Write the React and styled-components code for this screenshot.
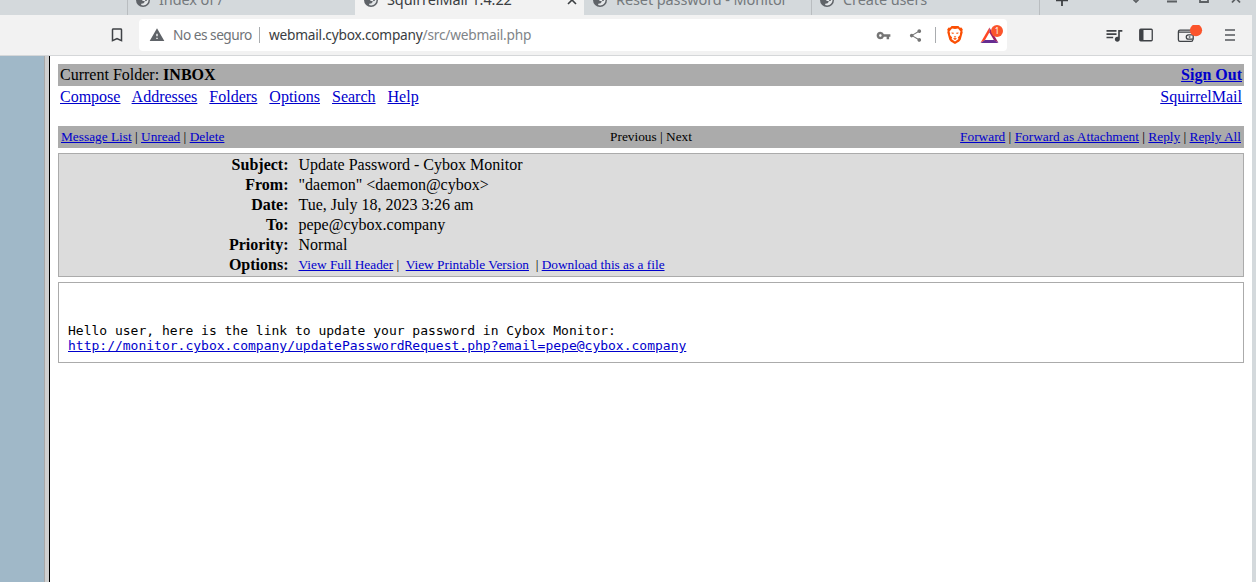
import React from "react";
import styled, { createGlobalStyle } from "styled-components";
import {
  MdVpnKey,
  MdShare,
  MdWarning,
  MdBookmarkBorder,
  MdQueueMusic,
} from "react-icons/md";

const GlobalStyle = createGlobalStyle`
  * { box-sizing: border-box; }
  html, body { margin: 0; padding: 0; overflow: hidden; background: #fff; }
`;

const Window = styled.div`
  display: flex;
  flex-direction: column;
  width: 1256px;
  height: 582px;
  padding-right: 4px;
  overflow: hidden;
  background: #d4d9dc;
  font-family: "Noto Sans", sans-serif;
`;

const TabStrip = styled.div`
  display: flex;
  flex: none;
  height: 15px;
  align-items: flex-end;
  overflow: hidden;
`;

const Tab = styled.div`
  display: flex;
  flex: none;
  align-items: center;
  width: ${(p) => p.$width}px;
  height: 30px;
  padding-left: ${(p) => (p.$divider ? 8 : 9)}px;
  background: ${(p) => (p.$active ? "#f2f2f2" : "transparent")};
  border-left: ${(p) => (p.$divider ? "1px solid #b9bdc0" : "none")};
  color: ${(p) => (p.$active ? "#3b3e42" : "#75797d")};
  svg { flex: none; }
`;

const TabTitle = styled.span`
  flex: 1;
  margin-left: 9px;
  padding-bottom: 2px;
  font-size: 14.5px;
  line-height: 20px;
  letter-spacing: -0.1px;
  white-space: nowrap;
`;

const TabClose = styled.svg`
  margin-right: 7px;
`;

const TabControls = styled.div`
  display: flex;
  flex: 1;
  height: 30px;
  align-items: center;
  border-left: 1px solid #b9bdc0;
`;

const Toolbar = styled.div`
  display: flex;
  flex: none;
  align-items: center;
  height: 41px;
  padding: 0 17px 0 108px;
  background: #f2f2f2;
  border-bottom: 1px solid #d5d7d9;
  color: #3f4246;
  svg { flex: none; }
`;

const AddressBar = styled.div`
  display: flex;
  flex: none;
  align-items: center;
  width: 868px;
  height: 32px;
  margin-left: 13px;
  padding: 0 3px 0 10px;
  border-radius: 4px;
  background: #fff;
  color: #6f7377;
  font-size: 13.7px;
  line-height: 18px;
  white-space: nowrap;
`;

const Security = styled.span`
  width: 79px;
  margin-left: 8px;
  letter-spacing: -0.5px;
`;

const Divider = styled.span`
  width: 1px;
  height: 16px;
  margin: 0 ${(p) => p.$right}px 0 ${(p) => p.$left}px;
  background: #a9acaf;
`;

const Url = styled.span`
  flex: 1;
  color: #808488;
  letter-spacing: -0.22px;
`;

const Host = styled.span`
  color: #3a3d41;
`;

const Actions = styled.div`
  display: flex;
  flex: none;
  align-items: center;
  color: #757575;
`;

const ShareIcon = styled(MdShare)`
  margin-left: 17px;
`;

const Rewards = styled.div`
  position: relative;
  width: 24px;
  height: 22px;
  padding-top: 3px;
  margin-left: 17px;
`;

const Badge = styled.span`
  position: absolute;
  top: 1px;
  right: 1px;
  width: 12px;
  height: 12px;
  border-radius: 6px;
  background: #fb542b;
  color: #fff;
  font-size: 8px;
  line-height: 12px;
  text-align: center;
`;

const Tools = styled.div`
  display: flex;
  align-items: center;
  margin-left: auto;
`;

const Tool = styled.span`
  display: flex;
  margin-left: ${(p) => p.$gap || 0}px;
`;

const Frames = styled.div`
  display: flex;
  flex: 1;
  background: #fff;
`;

const FolderPane = styled.div`
  width: 44px;
  background: #a0b8c8;
`;

const FrameBorder = styled.div`
  width: 6px;
  background: #d0d0d0;
  border-left: 1px solid #a8a8a8;
  border-right: 1px solid #000;
`;

const Mail = styled.main`
  flex: 1;
  padding: 8px;
  color: #000;
  font-family: "Liberation Serif", serif;
  font-size: 16px;
  line-height: 20px;
`;

const Link = styled.a`
  color: #0000cc;
  text-decoration: underline;
  cursor: pointer;
`;

const Row = styled.div`
  display: flex;
  justify-content: space-between;
  height: 22px;
  padding: 1px 2px;
  background: ${(p) => (p.$shaded ? "#ababab" : "transparent")};
`;

const Menu = styled.div`
  white-space: pre;
`;

const MessageBar = styled.div`
  display: grid;
  grid-template-columns: 1fr auto 1fr;
  height: 22px;
  margin-top: 18px;
  padding: 1px 3px;
  background: #ababab;
  font-size: 13.333px;
  white-space: pre;
`;

const BarGroup = styled.div`
  text-align: ${(p) => p.$align};
`;

const Headers = styled.dl`
  display: grid;
  grid-template-columns: 229.5px 1fr;
  column-gap: 10px;
  height: 124px;
  margin: 5px 0 0;
  padding: 1px 0;
  border: 1px solid #ababab;
  background: #dcdcdc;
`;

const Label = styled.dt`
  font-weight: bold;
  text-align: right;
`;

const Value = styled.dd`
  margin: 0;
  font-size: ${(p) => (p.$small ? 13.333 : 16)}px;
  white-space: pre;
`;

const Body = styled.div`
  height: 81px;
  margin-top: 5px;
  padding: 40px 9px 0;
  border: 1px solid #ababab;
  font-family: "DejaVu Sans Mono", monospace;
  font-size: 13px;
  line-height: 15px;
`;

const Globe = () => (
  <svg width="14" height="14" viewBox="0 0 14 14">
    <circle cx="7" cy="7" r="7" fill="#5f6368" />
    <path
      d="M8.3 1.6C10.8 2.2 12.5 4.3 12.5 7C12.5 10 10.1 12.4 7.2 12.4C6.4 12.4 5.7 12.3 5 12L5.6 10.6H7.2L8.6 9V8H6.4V6.6L7.6 5.5V4.2H8.3Z"
      fill="#e4e7e9"
    />
    <path d="M9.4 6.2L10.8 6.4L11 7.6L9.8 8.2L9 7.4Z" fill="#5f6368" />
  </svg>
);

const Lion = () => (
  <svg width="16" height="18" viewBox="0 0 16 18">
    <path
      d="M4.6 0H11.4L13 1.7L14.4 1.5L15.8 3.5L15.3 5L15.7 6.2L13.8 13.2C13.3 14.8 12 15.7 8 18C4 15.7 2.7 14.8 2.2 13.2L0.3 6.2L0.7 5L0.2 3.5L1.6 1.5L3 1.7Z"
      fill="#fb4f04"
    />
    <path
      d="M5 2.6L8 3.1L11 2.6L13.5 5.5L12.9 7.4L13 9L10.8 11.5L11.5 13L8 15.5L4.5 13L5.2 11.5L3 9L3.1 7.4L2.5 5.5Z"
      fill="#fff"
    />
    <path
      d="M4.4 6.4L6.8 6.7L6.4 8L4.8 7.5ZM11.6 6.4L9.2 6.7L9.6 8L11.2 7.5ZM6.8 10L8 10.6L9.2 10L8.6 11.5H7.4ZM6 12.6L8 11.9L10 12.6L8 13.9Z"
      fill="#fb4f04"
    />
  </svg>
);

const Triangle = () => (
  <svg width="19" height="17" viewBox="0 0 19 17">
    <path d="M9.4 0.6L0.6 15.8L4.9 13.2L9.4 5.5Z" fill="#ff4724" />
    <path d="M9.4 0.6L18.4 15.8L14 13.2L9.4 5.5Z" fill="#9e1f63" />
    <path d="M0.6 16L18.4 16L14.2 12.9H4.9Z" fill="#662d91" />
  </svg>
);

const Sidebar = () => (
  <svg width="14" height="14" viewBox="0 0 14 14">
    <rect x="0.75" y="1.25" width="12.5" height="11.5" rx="1" fill="none" stroke="currentColor" strokeWidth="1.3" />
    <path d="M1 1h3.5v12H1z" fill="currentColor" />
  </svg>
);

const Wallet = () => (
  <svg width="26" height="20" viewBox="0 0 26 20" fill="none" stroke="currentColor" strokeWidth="1.3">
    <path d="M15.8 9V8.5a1.3 1.3 0 0 0-1.3-1.3H1.7M14 5.2H3a1.6 1.6 0 0 0-1.6 1.6v8a1.6 1.6 0 0 0 1.6 1.6h11.2a1.6 1.6 0 0 0 1.6-1.6" />
    <path d="M16.2 9.8h-4.7a2.2 2.2 0 0 0 0 4.4h4.7z" />
    <path d="M11.8 12h1.6" />
    <circle cx="19" cy="5.2" r="6.1" fill="#fb542b" stroke="none" />
  </svg>
);

const Burger = () => (
  <svg width="10" height="14" viewBox="0 0 10 14" stroke="#55585c" strokeWidth="1.7">
    <path d="M0 2h10M0 7h10M0 12h10" />
  </svg>
);

const WindowControls = () => (
  <svg width="212" height="30" viewBox="0 -15 212 30" fill="none" stroke="#3d4043" strokeWidth="1.8">
    <path d="M16 0.3H28M22-6V6" />
    <path d="M91-3L96 2L101-3M127 1.5H137M160-5V2H168V-5M192-6L200 2.5M200-6L192 2.5" stroke="#5c6063" />
  </svg>
);

const MENU = ["Compose", "Addresses", "Folders", "Options", "Search", "Help"];

const HEADERS = [
  ["Subject:", "Update Password - Cybox Monitor"],
  ["From:", '"daemon" <daemon@cybox>'],
  ["Date:", "Tue, July 18, 2023 3:26 am"],
  ["To:", "pepe@cybox.company"],
  ["Priority:", "Normal"],
];

function LinkList({ items, separator = " | " }) {
  return items.map((item, i) => (
    <React.Fragment key={item}>
      {i > 0 && separator}
      <Link>{item}</Link>
    </React.Fragment>
  ));
}

export default function App() {
  return (
    <Window>
      <GlobalStyle />
      <TabStrip>
        <Tab $width={127} />
        <Tab $width={228} $divider>
          <Globe />
          <TabTitle>Index of /</TabTitle>
        </Tab>
        <Tab $width={229} $active>
          <Globe />
          <TabTitle>SquirrelMail 1.4.22</TabTitle>
          <TabClose width="10" height="10" viewBox="0 0 10 10" stroke="#3d4043" strokeWidth="1.6">
            <path d="M1 1L9 9M9 1L1 9" />
          </TabClose>
        </Tab>
        <Tab $width={227}>
          <Globe />
          <TabTitle>Reset password - Monitor</TabTitle>
        </Tab>
        <Tab $width={228} $divider>
          <Globe />
          <TabTitle>Create users</TabTitle>
        </Tab>
        <TabControls>
          <WindowControls />
        </TabControls>
      </TabStrip>

      <Toolbar>
        <MdBookmarkBorder size={18} />
        <AddressBar>
          <MdWarning size={16} color="#5f6368" />
          <Security>No es seguro</Security>
          <Divider $left={7} $right={9} />
          <Url>
            <Host>webmail.cybox.company</Host>/src/webmail.php
          </Url>
          <Actions>
            <MdVpnKey size={15} />
            <ShareIcon size={15} />
            <Divider $left={12} $right={11} />
            <Lion />
            <Rewards>
              <Triangle />
              <Badge>1</Badge>
            </Rewards>
          </Actions>
        </AddressBar>
        <Tools>
          <Tool>
            <MdQueueMusic size={20} />
          </Tool>
          <Tool $gap={15}>
            <Sidebar />
          </Tool>
          <Tool $gap={24}>
            <Wallet />
          </Tool>
          <Tool $gap={22}>
            <Burger />
          </Tool>
        </Tools>
      </Toolbar>

      <Frames>
        <FolderPane />
        <FrameBorder />
        <Mail>
          <Row $shaded>
            <span>
              Current Folder: <b>INBOX</b>
            </span>
            <b>
              <Link>Sign Out</Link>
            </b>
          </Row>
          <Row>
            <Menu>
              <LinkList items={MENU} separator={"\u00a0\u00a0 "} />
            </Menu>
            <Link>SquirrelMail</Link>
          </Row>
          <MessageBar>
            <BarGroup $align="left">
              <LinkList items={["Message List", "Unread", "Delete"]} />
            </BarGroup>
            <BarGroup $align="center">Previous | Next</BarGroup>
            <BarGroup $align="right">
              <LinkList items={["Forward", "Forward as Attachment", "Reply", "Reply All"]} />
            </BarGroup>
          </MessageBar>
          <Headers>
            {HEADERS.map(([label, value]) => (
              <React.Fragment key={label}>
                <Label>{label}</Label>
                <Value>{value}</Value>
              </React.Fragment>
            ))}
            <Label>Options:</Label>
            <Value $small>
              <Link>View Full Header</Link>
              {" |  "}
              <Link>View Printable Version</Link>
              {"  | "}
              <Link>Download this as a file</Link>
            </Value>
          </Headers>
          <Body>
            <div>Hello user, here is the link to update your password in Cybox Monitor:</div>
            <Link>http://monitor.cybox.company/updatePasswordRequest.php?email=pepe@cybox.company</Link>
          </Body>
        </Mail>
      </Frames>
    </Window>
  );
}
